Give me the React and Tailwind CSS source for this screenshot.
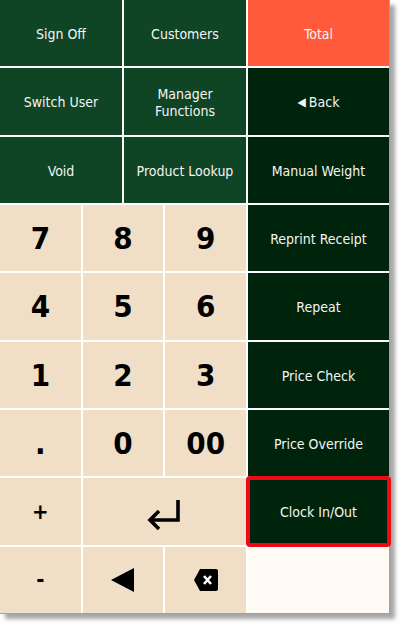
import React from "react";

const font = { fontFamily: '"DejaVu Sans Condensed", "DejaVu Sans", sans-serif' };

function G({ children, span = "col-span-3", cls = "bg-[#0f4424]" }) {
  return (
    <div className={`${span} ${cls} flex items-center justify-center pt-[3px] text-center text-[14px] leading-[17px] text-[#f4f4f4]`}>
      {children}
    </div>
  );
}

function R({ children, cls = "bg-[#00240b]" }) {
  return (
    <div className={`${cls} flex items-center justify-center pt-[3px] text-center text-[14px] leading-[17px] text-[#f4f4f4]`}>
      {children}
    </div>
  );
}

function K({ children, span = "col-span-2", cls = "text-[31px]" }) {
  return (
    <div className={`${span} bg-[#f0dfc6] flex items-center justify-center font-bold text-black ${cls}`}>
      {children}
    </div>
  );
}

export default function App() {
  return (
    <div className="w-[400px] h-[624px] bg-white" style={font}>
      <div className="w-[390px] h-[614px] border-r border-b border-[#a0a0a0] shadow-[5px_5px_4px_rgba(0,0,0,0.35)]">
        <div className="grid h-[613px] w-[389px] grid-cols-[repeat(6,1fr)_141px] grid-rows-9 gap-[2px] bg-white">
          <G>Sign Off</G>
          <G>Customers</G>
          <R cls="bg-[#ff5a3b]">Total</R>

          <G>Switch User</G>
          <G>
            Manager
            <br />
            Functions
          </G>
          <R>
            <span className="text-[12px] mr-[3px]">◀</span>Back
          </R>

          <G>Void</G>
          <G>Product Lookup</G>
          <R>Manual Weight</R>

          <K>7</K>
          <K>8</K>
          <K>9</K>
          <R>Reprint Receipt</R>

          <K>4</K>
          <K>5</K>
          <K>6</K>
          <R>Repeat</R>

          <K>1</K>
          <K>2</K>
          <K>3</K>
          <R>Price Check</R>

          <K>.</K>
          <K>0</K>
          <K>00</K>
          <R>Price Override</R>

          <K cls="text-[22px]">+</K>
          <K span="col-span-4">
            <svg width="36" height="36" viewBox="0 0 36 36" className="mt-[8px]">
              <path d="M32 3 V23 H5" fill="none" stroke="#000" strokeWidth="3.6" />
              <path d="M13 14 L4 23 L13 32" fill="none" stroke="#000" strokeWidth="3.6" strokeLinejoin="miter" />
            </svg>
          </K>
          <div className="bg-[#00240b] -m-[2px] flex items-center justify-center rounded-[4px] border-[4px] border-[#ee0a14] pt-[3px] text-center text-[14px] text-[#f4f4f4]">
            Clock In/Out
          </div>

          <K cls="text-[22px]">-</K>
          <K>
            <svg width="26" height="26" viewBox="0 0 26 26">
              <path d="M1 13 L24 1 V25 Z" fill="#000" />
            </svg>
          </K>
          <K>
            <svg width="26" height="24" viewBox="0 0 26 24">
              <path d="M7 1 H23 Q25 1 25 3 V21 Q25 23 23 23 H7 L1 12 Z" fill="#000" />
              <path d="M11 8 L18 16 M18 8 L11 16" stroke="#fff" strokeWidth="2.6" />
            </svg>
          </K>
          <div className="bg-[#fffaf3]" />
        </div>
      </div>
    </div>
  );
}
